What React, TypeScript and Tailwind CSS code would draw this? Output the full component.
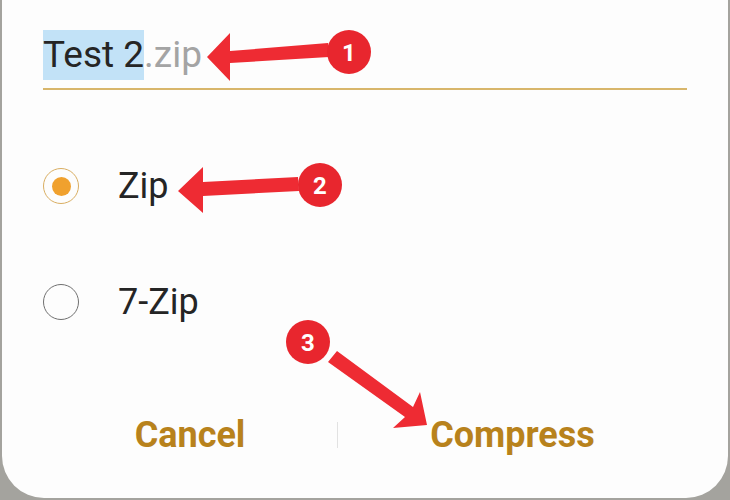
import React from 'react';

const ACCENT = '#b8821c';

function Radio({ checked }: { checked: boolean }) {
  return checked ? (
    <span className="flex h-[36px] w-[36px] items-center justify-center rounded-full border-[1.5px] border-[#d9ae62]">
      <span className="h-[19px] w-[19px] rounded-full bg-[#f0a12e]" />
    </span>
  ) : (
    <span className="h-[36px] w-[36px] rounded-full border-[1.5px] border-[#707070]" />
  );
}

function Annotations() {
  return (
    <svg className="pointer-events-none absolute left-0 top-0" width="730" height="500" viewBox="0 0 730 500">
      {/* 1 */}
      <polygon points="328,43 230,51 230,33 207,57 230,81 230,63 329,57" fill="#ee2b33" />
      <circle cx="349" cy="52" r="22" fill="#e8262e" />
      <text x="349" y="61" textAnchor="middle" fontFamily="Roboto, sans-serif" fontWeight="700" fontSize="24" fill="#fff">1</text>
      {/* 2 */}
      <polygon points="298,177 203,182 203,167 178,191 203,213 203,196 299,191" fill="#ee2b33" />
      <circle cx="320" cy="185" r="22" fill="#e8262e" />
      <text x="320" y="194" textAnchor="middle" fontFamily="Roboto, sans-serif" fontWeight="700" fontSize="24" fill="#fff">2</text>
      {/* 3 */}
      <polygon points="328,362 337,351 413,407 420,392 427,425 393,428 405,417" fill="#ee2b33" />
      <circle cx="308" cy="342" r="22" fill="#e8262e" />
      <text x="308" y="351" textAnchor="middle" fontFamily="Roboto, sans-serif" fontWeight="700" fontSize="24" fill="#fff">3</text>
    </svg>
  );
}

export default function App() {
  return (
    <div className="relative h-[500px] w-[730px] overflow-hidden bg-[#a4a39e] font-['Roboto',sans-serif]">
      <div className="mx-[2px] h-[498px] rounded-b-[42px] bg-[#fdfdfd] px-[41px] pt-[30px]">
        {/* File name */}
        <div className="border-b-2 border-[#d8b66b] pb-[8px]">
          <div className="flex h-[50px] items-center text-[37px] leading-[50px] text-[#252525]">
            <span className="inline-block h-[50px] bg-[#c2e2f7]">Test 2</span>
            <span className="text-[#a4a4a4]">.zip</span>
          </div>
        </div>

        {/* Format options */}
        <div className="mt-[38px] flex h-[116px] items-center gap-[39px]">
          <Radio checked />
          <span className="text-[36px] text-[#252525]">Zip</span>
        </div>
        <div className="flex h-[116px] items-center gap-[39px]">
          <Radio checked={false} />
          <span className="text-[36px] text-[#252525]">7-Zip</span>
        </div>

        {/* Actions */}
        <div className="mt-[40px] flex h-[70px] items-center">
          <button className="w-[294px] text-center text-[36px] font-bold" style={{ color: ACCENT }}>
            Cancel
          </button>
          <span className="h-[26px] w-px bg-[#e2e2e2]" />
          <button className="flex-1 text-center text-[36px] font-bold" style={{ color: ACCENT }}>
            Compress
          </button>
        </div>
      </div>
      <Annotations />
    </div>
  );
}
